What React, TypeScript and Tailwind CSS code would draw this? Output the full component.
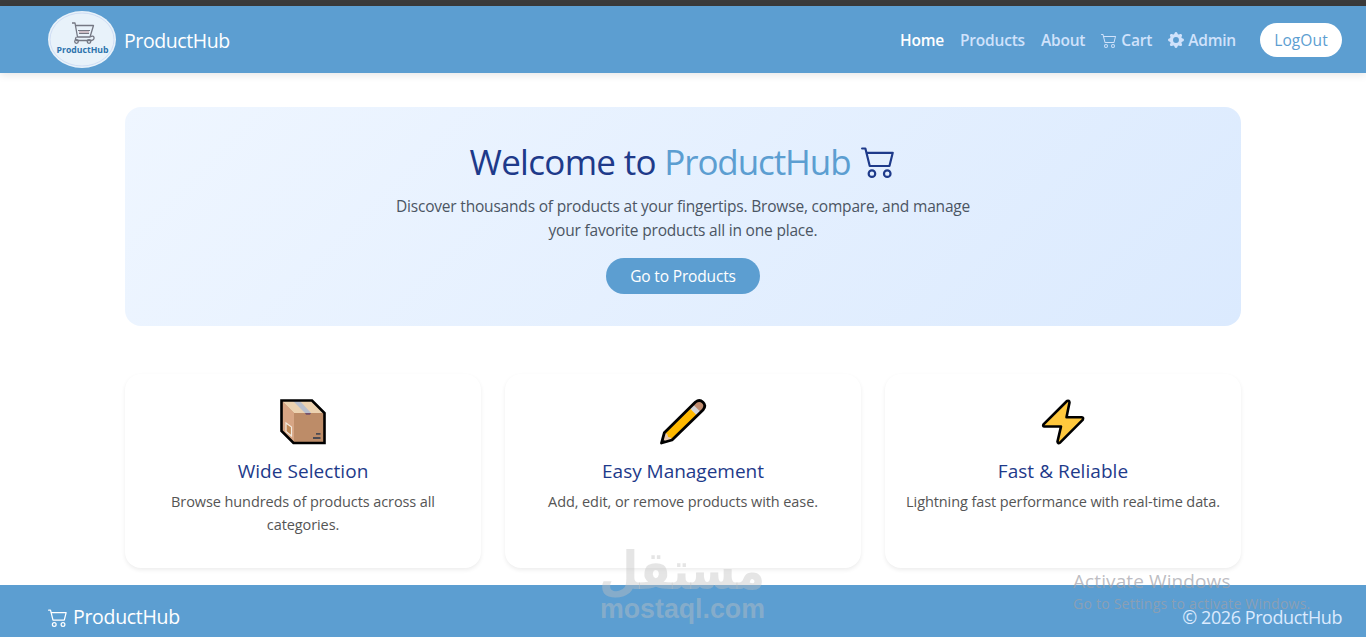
import React from "react";
import { BsCart2, BsGearFill } from "react-icons/bs";

const BoxIcon = () => (
  <svg width="48" height="48" viewBox="0 0 48 48">
    <path d="M2.2 2H33l12.8 12.7V45H14.5L2.2 33z" fill="#bd8c68" />
    <path d="M3 3h29.5L45 15H15z" fill="#ecd2b0" />
    <path d="M3 3l12 12v29L3 32.5z" fill="#d7a584" />
    <path d="M14 3h7l11 12h-6z" fill="#b9bfcc" />
    <path d="M26 15h6l-1 1.7h-4z" fill="#75506a" />
    <path d="M7 25l5.5 4v9L7 33.5z" fill="#c08a58" stroke="#f2eadf" strokeWidth="1.2" />
    <path d="M37 35.8h4.5M34 40h7.5" stroke="#4b4a52" strokeWidth="1.8" />
    <path d="M2.5 2.5H33l12.5 12.5V45H14.5L2.5 33z" fill="none" stroke="#000" strokeWidth="2.6" />
  </svg>
);

const PencilIcon = () => (
  <svg width="48" height="48" viewBox="0 0 48 48">
    <path d="M2.2 44.8L5 34.5 36.5 3.8Q40.5.8 44 4T44.2 11.5L12.7 42z" fill="#ffb900" />
    <path d="M32.5 7.7l4-3.9Q40.5.8 44 4t.2 7.5l-4 3.9z" fill="#c18d70" />
    <path d="M30.5 10l3.600-3.600 7.500 7.500-3.700 3.600z" fill="#d4d4d6" />
    <path d="M5.300 34.700l3 1.200.800 3 3 .800.700 2L2.500 44.500z" fill="#eacbb0" />
    <path d="M3.700 40.500l3 3-4.500 1.200z" fill="#413a3a" />
    <path
      d="M2.500 45L5.300 34.800 36.500 4Q40.500 1 44 4.200T44.200 11.700L13 42z"
      fill="none"
      stroke="#000"
      strokeWidth="2.800"
      strokeLinejoin="round"
    />
  </svg>
);

const BoltIcon = () => (
  <svg width="48" height="48" viewBox="0 0 48 48">
    <path
      d="M28 3L4.500 26.300q-1 2 1 2.200H22L18.500 43.500q.3 2.500 2.500 1.200L43.700 21.800q1.200-2.200-1-2.600H27.500L30.500 4.500q-.2-2.300-2.500-1.500z"
      fill="#ffc83d"
      stroke="#000"
      strokeWidth="2.600"
      strokeLinejoin="round"
    />
  </svg>
);

const Logo = () => (
  <svg width="68" height="57" viewBox="0 0 68 57">
    <ellipse cx="34" cy="28.5" rx="34" ry="28.5" fill="#e8f2fa" />
    <ellipse cx="34" cy="28.5" rx="32" ry="26.5" fill="none" stroke="#c9d8f2" strokeWidth=".8" />
    <g fill="none" stroke="#747783" strokeWidth="1.3" strokeLinejoin="round">
      <path d="M24 12h3l2.500 14h12.500L45.500 14.500H27.500M28.500 26q-2 2 0 3.500h14.500q3.500-.5 3-3t-4-.5" />
      <circle cx="28.500" cy="30.500" r="1.800" />
      <circle cx="41" cy="30.500" r="1.800" />
    </g>
    <path d="M30 19.500h12M31 22.500h10" stroke="#747783" strokeWidth="1" />
    <path d="M31 21h10" stroke="#a26c74" strokeWidth=".8" />
    <text
      x="8.500"
      y="41.500"
      textLength="52"
      lengthAdjust="spacingAndGlyphs"
      fontSize="9"
      fontWeight="700"
      fontFamily="'Open Sans', sans-serif"
      fill="#2c73ad"
    >
      ProductHub
    </text>
  </svg>
);

const features = [
  {
    icon: <BoxIcon />,
    title: "Wide Selection",
    text: "Browse hundreds of products across all categories.",
    titleClass: "tracking-[0.06px]",
  },
  {
    icon: <PencilIcon />,
    title: "Easy Management",
    text: "Add, edit, or remove products with ease.",
    titleClass: "tracking-[-0.02px]",
  },
  {
    icon: <BoltIcon />,
    title: "Fast & Reliable",
    text: "Lightning fast performance with real-time data.",
    titleClass: "tracking-[0.06px]",
  },
];

const Navbar = () => (
  <header className="flex h-[67px] shrink-0 items-center justify-between bg-[#5c9ed1] pl-12 pr-6 shadow-[0_2px_8px_rgba(0,0,0,0.1)]">
    <div className="flex items-center gap-2 text-white">
      <Logo />
      <span className="pt-0.5 text-[19.5px] tracking-[-0.4px]">ProductHub</span>
    </div>
    <nav className="flex items-center gap-4 whitespace-nowrap text-[15.5px] font-semibold tracking-[-0.2px] text-[#d0e2fb]">
      <a className="pt-0.5 text-white">Home</a>
      <a className="pt-0.5">Products</a>
      <a className="pt-0.5">About</a>
      <a className="flex items-center gap-1">
        <BsCart2 size={16} />
        <span className="pt-0.5">Cart</span>
      </a>
      <a className="flex items-center gap-1">
        <BsGearFill size={16} />
        <span className="pt-0.5">Admin</span>
      </a>
      <button className="ml-2 h-[34px] w-[82px] rounded-full bg-white pt-0.5 font-medium tracking-[0.1px] text-[#5c9ed1]">
        LogOut
      </button>
    </nav>
  </header>
);

const Hero = () => (
  <section className="flex h-[219px] flex-col items-center rounded-2xl bg-linear-135 from-[#eff6ff] to-[#dbeafe] pt-8">
    <h1 className="flex h-[46px] items-center whitespace-nowrap text-[35px] text-[#1e3a8a]">
      <span className="tracking-[-0.7px]">
        Welcome to <span className="tracking-[-1.1px] text-[#5c9ed1]">ProductHub</span>
      </span>
      <BsCart2 size={35} className="mb-1 ml-[11px]" />
    </h1>
    <p className="mt-[9px] w-[600px] text-center text-[15.5px] leading-6 tracking-[-0.19px] text-[#4b5563]">
      Discover thousands of products at your fingertips. Browse, compare, and manage
      <br />
      your favorite products all in one place.
    </p>
    <button className="mt-4 h-9 w-[154px] rounded-full bg-[#5c9ed1] pt-0.5 text-[15.5px] tracking-[-0.15px] text-white">
      Go to Products
    </button>
  </section>
);

// Overlays sit above the page and the footer
const Overlays = () => (
  <div className="pointer-events-none">
    <svg className="absolute left-[590px] top-[530px]" width="186" height="107" viewBox="-10 -10 186 107">
      <g fill="#c1c1c1" fillOpacity=".42">
        <text
          x="165"
          y="49"
          direction="rtl"
          textLength="166"
          lengthAdjust="spacingAndGlyphs"
          fontSize="53"
          fontWeight="700"
          fontFamily="'DejaVu Sans', sans-serif"
        >
          مستقل
        </text>
        <text
          x="0"
          y="78"
          textLength="165"
          lengthAdjust="spacingAndGlyphs"
          fontSize="27"
          fontWeight="700"
          fontFamily="'Liberation Sans', sans-serif"
        >
          mostaql.com
        </text>
      </g>
    </svg>
    <div className="absolute left-[1073px] top-[569px] whitespace-nowrap text-[#a0a0a8]/70">
      <div className="text-[19px] leading-6 tracking-[0.1px]">Activate Windows</div>
      <div className="text-[14px] leading-[22px] tracking-[0.23px]">
        Go to Settings to activate Windows.
      </div>
    </div>
  </div>
);

export default function App() {
  return (
    <div className="relative flex h-[637px] w-[1366px] flex-col overflow-hidden bg-white font-['Open_Sans','Noto_Sans',sans-serif]">
      <div className="h-1.5 shrink-0 bg-[#3b3b3b]" />
      <Navbar />

      <main className="mx-auto h-[512px] w-[1116px] shrink-0 pt-[34px]">
        <Hero />
        <div className="mt-12 grid grid-cols-3 gap-6">
          {features.map((feature) => (
            <div
              key={feature.title}
              className="flex h-[194px] flex-col items-center rounded-2xl bg-white px-4 pt-6 text-center shadow-[0_2px_4px_rgba(0,0,0,0.075)]"
            >
              {feature.icon}
              <h3 className={`mt-3 text-[19px] leading-[26px] text-[#1e3a8a] ${feature.titleClass}`}>
                {feature.title}
              </h3>
              <p className="mt-1.5 text-[14.5px] leading-[23px] tracking-[-0.09px] text-[#555]">
                {feature.text}
              </p>
            </div>
          ))}
        </div>
      </main>

      <footer className="flex h-16 shrink-0 items-center justify-between bg-[#5c9ed1] pl-12 pr-6 text-white">
        <div className="flex items-center gap-[5px] text-[19.5px] tracking-[-0.3px]">
          <BsCart2 size={20} />
          ProductHub
        </div>
        <span className="text-[18px] tracking-[-0.42px] text-[#dbeafe]">© 2026 ProductHub</span>
      </footer>
      <Overlays />
    </div>
  );
}
